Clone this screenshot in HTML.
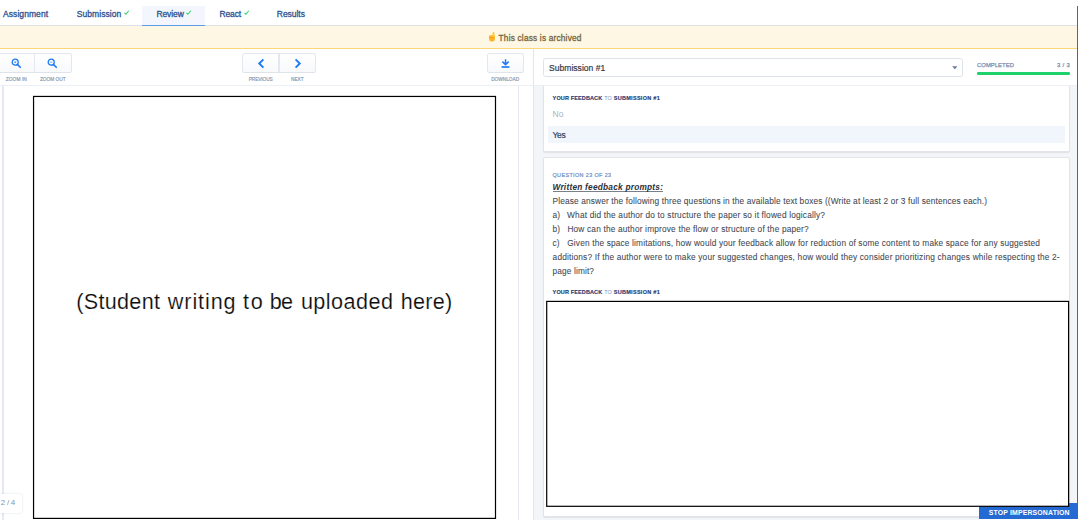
<!DOCTYPE html>
<html><head><meta charset="utf-8">
<style>
*{box-sizing:border-box;margin:0;padding:0}
html,body{width:1083px;height:520px;overflow:hidden;background:#fff;font-family:"Liberation Sans",sans-serif;}
.a{position:absolute}
#root{position:relative;width:1083px;height:520px;overflow:hidden;background:#fff}
.x{position:absolute;white-space:nowrap;line-height:1}
.btn{position:absolute;border:1px solid #e4e8ee;border-bottom-color:#dfe3ea;background:linear-gradient(#fff,#f8f9fb);border-radius:2.5px}
.card{position:absolute;background:#fff;border:1px solid #e1e5eb;border-radius:2px;box-shadow:0 1px 1px rgba(30,40,60,.09)}
</style></head><body>
<div id="root">
<!-- tab bar -->
<div class="a" style="left:0;top:25px;width:1077px;height:1px;background:#dde1e8"></div>
<div class="a" style="left:142px;top:5.5px;width:63px;height:19.5px;background:#f3f7fd"></div>
<div class="a" style="left:142px;top:24.7px;width:63px;height:1.2px;background:#5b9cec"></div>
<svg class="a" style="left:123.5px;top:10px" width="5.4" height="5.4" viewBox="0 0 6 6"><path d="M0.5 3.3 L2.1 4.7 L5.3 0.9" fill="none" stroke="#2fd06c" stroke-width="1.15"/></svg>
<svg class="a" style="left:186px;top:10px" width="5.4" height="5.4" viewBox="0 0 6 6"><path d="M0.5 3.3 L2.1 4.7 L5.3 0.9" fill="none" stroke="#2fd06c" stroke-width="1.15"/></svg>
<svg class="a" style="left:243.5px;top:10px" width="5.4" height="5.4" viewBox="0 0 6 6"><path d="M0.5 3.3 L2.1 4.7 L5.3 0.9" fill="none" stroke="#2fd06c" stroke-width="1.15"/></svg>

<!-- banner -->
<div class="a" style="left:0;top:26px;width:1077px;height:22px;background:#fdf7e4"></div>
<div class="a" style="left:0;top:47.8px;width:1077px;height:1.2px;background:#f8d67a"></div>
<svg class="a" style="left:488px;top:31px" width="8" height="11" viewBox="0 0 8 11"><defs><linearGradient id="eg" x1="0" y1="0" x2="0" y2="1"><stop offset="0" stop-color="#ffc83a"/><stop offset="1" stop-color="#fbab1e"/></linearGradient></defs><rect x="4.6" y="0.9" width="1.8" height="6" rx=".9" fill="#ffc435"/><path d="M1 5.2 Q1 4 2.4 4 L6.2 4 Q7 4 7 5.2 L7 7.6 Q7 10.6 4 10.6 Q1 10.6 1 7.6 Z" fill="url(#eg)"/><path d="M1.6 6.5 Q3 5.8 4.2 6.8 Q5 7.5 5.6 7.2" stroke="#f58a12" stroke-width=".9" fill="none" stroke-linecap="round"/></svg>

<!-- toolbar left -->
<div class="btn" style="left:-3px;top:53px;width:75px;height:20px"></div>
<div class="a" style="left:34px;top:54px;width:1px;height:18px;background:#e4e8ee"></div>
<div class="btn" style="left:242px;top:53px;width:74px;height:20px"></div>
<div class="a" style="left:278.4px;top:54px;width:1.2px;height:18px;background:#e4e8ee"></div>
<div class="btn" style="left:487px;top:53px;width:37px;height:20px"></div>
<!-- icons -->
<svg class="a" style="left:11px;top:57.6px" width="11" height="11" viewBox="0 0 11 11"><circle cx="4.2" cy="4.2" r="3" fill="none" stroke="#1f7af3" stroke-width="1.3"/><path d="M6.6 6.6 L9.3 9.3" stroke="#1f7af3" stroke-width="1.6" stroke-linecap="round"/><path d="M3.1 4.2H5.3M4.2 3.1V5.3" stroke="#1f7af3" stroke-width=".6"/></svg>
<svg class="a" style="left:47px;top:57.6px" width="11" height="11" viewBox="0 0 11 11"><circle cx="4.2" cy="4.2" r="3" fill="none" stroke="#1f7af3" stroke-width="1.3"/><path d="M6.6 6.6 L9.3 9.3" stroke="#1f7af3" stroke-width="1.6" stroke-linecap="round"/><path d="M3.1 4.2H5.3" stroke="#1f7af3" stroke-width=".6"/></svg>
<svg class="a" style="left:256px;top:58px" width="10" height="11" viewBox="0 0 10 11"><path d="M7.4 1.3 L3.2 5.5 L7.4 9.7" fill="none" stroke="#1f7af3" stroke-width="1.9"/></svg>
<svg class="a" style="left:293px;top:58px" width="10" height="11" viewBox="0 0 10 11"><path d="M2.6 1.3 L6.8 5.5 L2.6 9.7" fill="none" stroke="#1f7af3" stroke-width="1.9"/></svg>
<svg class="a" style="left:499.6px;top:58px" width="11" height="11" viewBox="0 0 11 11"><path d="M5.55 1.2V6M2.4 3.6 L5.55 6.6 L8.7 3.6" fill="none" stroke="#1f7af3" stroke-width="1.5"/><path d="M1.6 9H9.5" stroke="#1f7af3" stroke-width="1.7"/></svg>

<!-- left pane -->
<div class="a" style="left:2.4px;top:86px;width:1.5px;height:434px;background:#e6e9ef"></div>
<div class="a" style="left:518px;top:86px;width:1px;height:434px;background:#e5e8ee"></div>
<svg class="a" style="left:0;top:0" width="1083" height="520" viewBox="0 0 1083 520"><rect x="33.55" y="96.45" width="461.95" height="421.95" fill="#fff" stroke="#000" stroke-width="1.2"/></svg>
<div class="a" style="left:-4px;top:493.7px;width:26.4px;height:19px;background:#fff;border-radius:3px;box-shadow:0 0 2.5px rgba(40,60,90,.16)"></div>

<!-- right pane -->
<div class="a" style="left:533.6px;top:86.4px;width:543px;height:434px;background:#f3f5f8"></div>
<div class="a" style="left:533px;top:49px;width:1.2px;height:471px;background:#e1e5ec"></div>
<div class="a" style="left:543px;top:58px;width:420px;height:19px;border:1px solid #dee2e9;border-radius:2.5px;background:#fff"></div>
<svg class="a" style="left:951.7px;top:66px" width="5.6" height="3.4" viewBox="0 0 5.6 3.4"><path d="M0.2 0.3H5.4L2.8 3.3Z" fill="#6a7d9f"/></svg>
<div class="a" style="left:977px;top:72px;width:92.8px;height:2.6px;background:#1fd16b;border-radius:1.3px"></div>

<div class="card" style="left:543px;top:80px;width:527px;height:72.4px;border-top:none"></div>
<div class="a" style="left:534.4px;top:78px;width:542px;height:7.2px;background:#fff"></div>
<div class="a" style="left:548px;top:126.3px;width:516.5px;height:16.6px;background:#f1f6fd"></div>

<div class="card" style="left:543px;top:157px;width:527px;height:360.4px"></div>
<div class="a" style="left:552.5px;top:190.8px;width:110.5px;height:1px;background:#7b7f87"></div>

<div class="a" style="left:0;top:85px;width:1077px;height:1.4px;background:#eceff3"></div>
<!-- right edge -->
<div class="a" style="left:1078.1px;top:0;width:6px;height:520px;background:#fff"></div>
<div class="a" style="left:1076.6px;top:5.8px;width:1.5px;height:515px;background:#2b6cd4"></div>
<div class="a" style="left:979px;top:503px;width:99.2px;height:15.6px;background:#2569d2"></div>
<div class="a" style="left:979px;top:518.6px;width:105px;height:2px;background:#fff"></div>
<svg class="a" style="left:0;top:0" width="1083" height="520" viewBox="0 0 1083 520"><rect x="546.7" y="301.4" width="521.9" height="204.9" fill="#fff" stroke="#000" stroke-width="1.2"/></svg>
<div class="x" style="left:3.00px;top:10.20px;font-size:8.5px;letter-spacing:0.075px;color:#2d5190;-webkit-text-stroke:.3px #2d5190;">Assignment</div>
<div class="x" style="left:76.80px;top:10.20px;font-size:8.5px;letter-spacing:0.062px;color:#2d5190;-webkit-text-stroke:.3px #2d5190;">Submission</div>
<div class="x" style="left:156.40px;top:10.20px;font-size:8.5px;letter-spacing:-0.075px;color:#2d5190;-webkit-text-stroke:.3px #2d5190;">Review</div>
<div class="x" style="left:219.40px;top:10.20px;font-size:8.5px;letter-spacing:-0.105px;color:#2d5190;-webkit-text-stroke:.3px #2d5190;">React</div>
<div class="x" style="left:276.80px;top:10.20px;font-size:8.5px;letter-spacing:-0.041px;color:#2d5190;-webkit-text-stroke:.3px #2d5190;">Results</div>
<div class="x" style="left:498.60px;top:33.57px;font-size:8.3px;letter-spacing:0.188px;color:#77663a;-webkit-text-stroke:.3px #77663a;">This class is archived</div>
<div class="x" style="left:5.80px;top:77.54px;font-size:4.8px;letter-spacing:0.078px;color:#8794ad;-webkit-text-stroke:.15px #8794ad;">ZOOM IN</div>
<div class="x" style="left:39.90px;top:77.54px;font-size:4.8px;letter-spacing:-0.008px;color:#8794ad;-webkit-text-stroke:.15px #8794ad;">ZOOM OUT</div>
<div class="x" style="left:248.70px;top:77.54px;font-size:4.8px;letter-spacing:-0.100px;color:#8794ad;-webkit-text-stroke:.15px #8794ad;">PREVIOUS</div>
<div class="x" style="left:291.10px;top:77.54px;font-size:4.8px;letter-spacing:-0.099px;color:#8794ad;-webkit-text-stroke:.15px #8794ad;">NEXT</div>
<div class="x" style="left:491.20px;top:77.54px;font-size:4.8px;letter-spacing:-0.036px;color:#8794ad;-webkit-text-stroke:.15px #8794ad;">DOWNLOAD</div>
<div class="x" style="left:549.00px;top:64.10px;font-size:8.5px;letter-spacing:0.045px;color:#353a45;-webkit-text-stroke:.2px #353a45;">Submission #1</div>
<div class="x" style="left:977.00px;top:62.81px;font-size:5.9px;letter-spacing:0.029px;color:#7d8fb0;-webkit-text-stroke:.25px #7d8fb0;">COMPLETED</div>
<div class="x" style="left:1057.10px;top:62.81px;font-size:5.9px;letter-spacing:0.283px;color:#7d8fb0;-webkit-text-stroke:.25px #7d8fb0;">3 / 3</div>
<div class="x" style="left:552.60px;top:96.24px;font-size:5.5px;letter-spacing:0.135px;font-weight:bold;color:#1f3a70;-webkit-text-stroke:.15px #1f3a70;">YOUR FEEDBACK</div>
<div class="x" style="left:604.20px;top:96.24px;font-size:5.5px;letter-spacing:0.000px;color:#7c93bd;">TO</div>
<div class="x" style="left:613.70px;top:96.24px;font-size:5.5px;letter-spacing:0.301px;font-weight:bold;color:#1f3a70;-webkit-text-stroke:.15px #1f3a70;">SUBMISSION #1</div>
<div class="x" style="left:552.60px;top:109.70px;font-size:8.5px;letter-spacing:0.000px;color:#a7b2c4;">No</div>
<div class="x" style="left:552.60px;top:130.50px;font-size:8.5px;letter-spacing:-0.387px;color:#2f4468;-webkit-text-stroke:.2px #2f4468;">Yes</div>
<div class="x" style="left:552.50px;top:172.83px;font-size:5.4px;letter-spacing:0.405px;color:#7290c2;-webkit-text-stroke:.2px #7290c2;">QUESTION 23 OF 23</div>
<div class="x" style="left:552.50px;top:182.87px;font-size:8.3px;letter-spacing:0.230px;font-weight:bold;font-style:italic;color:#2b2f38;">Written feedback prompts:</div>
<div class="x" style="left:552.60px;top:197.07px;font-size:8.3px;letter-spacing:0.144px;color:#454a55;-webkit-text-stroke:.08px #454a55;">Please answer the following three questions in the available text boxes ((Write at least 2 or 3 full sentences each.)</div>
<div class="x" style="left:552.60px;top:211.07px;font-size:8.3px;letter-spacing:0.000px;color:#454a55;-webkit-text-stroke:.08px #454a55;">a)</div>
<div class="x" style="left:567.10px;top:211.07px;font-size:8.3px;letter-spacing:0.184px;color:#454a55;-webkit-text-stroke:.08px #454a55;">What did the author do to structure the paper so it flowed logically?</div>
<div class="x" style="left:552.60px;top:224.97px;font-size:8.3px;letter-spacing:0.000px;color:#454a55;-webkit-text-stroke:.08px #454a55;">b)</div>
<div class="x" style="left:567.40px;top:224.97px;font-size:8.3px;letter-spacing:0.183px;color:#454a55;-webkit-text-stroke:.08px #454a55;">How can the author improve the flow or structure of the paper?</div>
<div class="x" style="left:552.60px;top:238.87px;font-size:8.3px;letter-spacing:0.000px;color:#454a55;-webkit-text-stroke:.08px #454a55;">c)</div>
<div class="x" style="left:567.20px;top:238.87px;font-size:8.3px;letter-spacing:0.166px;color:#454a55;-webkit-text-stroke:.08px #454a55;">Given the space limitations, how would your feedback allow for reduction of some content to make space for any suggested</div>
<div class="x" style="left:552.60px;top:252.87px;font-size:8.3px;letter-spacing:0.180px;color:#454a55;-webkit-text-stroke:.08px #454a55;">additions? If the author were to make your suggested changes, how would they consider prioritizing changes while respecting the 2-</div>
<div class="x" style="left:552.60px;top:266.57px;font-size:8.3px;letter-spacing:0.127px;color:#454a55;-webkit-text-stroke:.08px #454a55;">page limit?</div>
<div class="x" style="left:552.60px;top:289.64px;font-size:5.5px;letter-spacing:0.135px;font-weight:bold;color:#1f3a70;-webkit-text-stroke:.15px #1f3a70;">YOUR FEEDBACK</div>
<div class="x" style="left:604.20px;top:289.64px;font-size:5.5px;letter-spacing:0.000px;color:#7c93bd;">TO</div>
<div class="x" style="left:613.70px;top:289.64px;font-size:5.5px;letter-spacing:0.301px;font-weight:bold;color:#1f3a70;-webkit-text-stroke:.15px #1f3a70;">SUBMISSION #1</div>
<div class="x" style="left:0.80px;top:499.33px;font-size:8px;letter-spacing:-0.270px;color:#8493b0;">2 / 4</div>
<div class="x" style="left:988.70px;top:509.86px;font-size:6.9px;letter-spacing:0.164px;font-weight:bold;color:#fff;">STOP IMPERSONATION</div>
<div class="x" style="left:76.20px;top:291.22px;font-size:21.6px;letter-spacing:0.308px;color:#0c0c0c;-webkit-text-stroke:.18px #fff;">(Student</div>
<div class="x" style="left:167.80px;top:291.22px;font-size:21.6px;letter-spacing:0.899px;color:#0c0c0c;-webkit-text-stroke:.18px #fff;">writing</div>
<div class="x" style="left:243.00px;top:291.22px;font-size:21.6px;letter-spacing:1.784px;color:#0c0c0c;-webkit-text-stroke:.18px #fff;">to</div>
<div class="x" style="left:269.80px;top:291.22px;font-size:21.6px;letter-spacing:-0.731px;color:#0c0c0c;-webkit-text-stroke:.18px #fff;">be</div>
<div class="x" style="left:300.90px;top:291.22px;font-size:21.6px;letter-spacing:0.461px;color:#0c0c0c;-webkit-text-stroke:.18px #fff;">uploaded</div>
<div class="x" style="left:400.70px;top:291.22px;font-size:21.6px;letter-spacing:0.245px;color:#0c0c0c;-webkit-text-stroke:.18px #fff;">here)</div>
</div>
</body></html>
